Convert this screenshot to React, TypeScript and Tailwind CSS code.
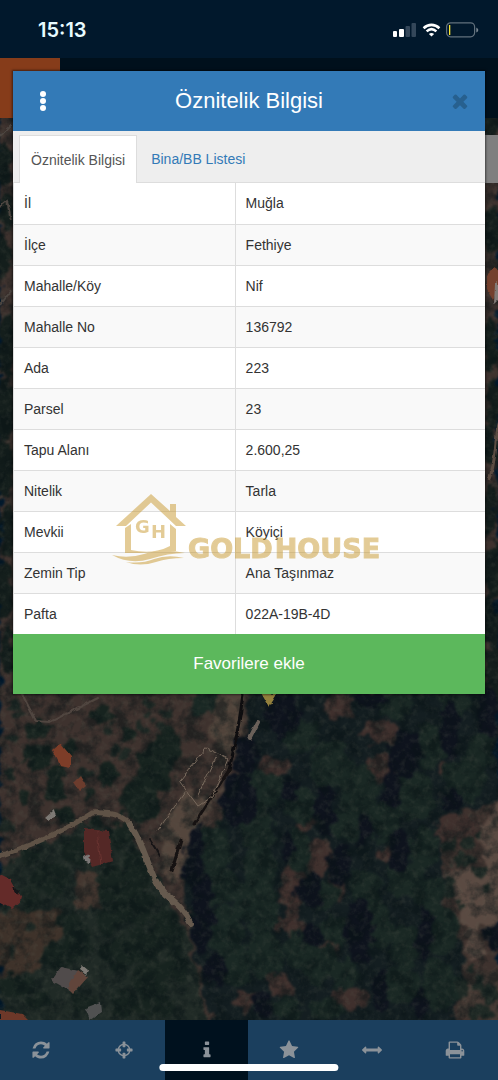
import React from 'react';

const ICONS = {
  refresh:
    'M1639 1056q0 5-1 7-64 268-268 434.5t-478 166.5q-146 0-282.5-55t-243.5-157l-129 129q-19 19-45 19t-45-19-19-45v-448q0-26 19-45t45-19h448q26 0 45 19t19 45-19 45l-137 137q71 66 161 102t187 36q134 0 250-65t186-179q11-17 53-117 8-23 30-23h192q13 0 22.5 9.5t9.5 22.5zm25-800v448q0 26-19 45t-45 19h-448q-26 0-45-19t-19-45 19-45l138-138q-148-137-349-137-134 0-250 65t-186 179q-11 17-53 117-8 23-30 23h-199q-13 0-22.5-9.5t-9.5-22.5v-7q65-268 270-434.5t480-166.5q146 0 284 55.5t245 156.5l130-129q19-19 45-19t45 19 19 45z',
  crosshairs:
    'M1325 1024h-109q-26 0-45-19t-19-45v-128q0-26 19-45t45-19h109q-32-108-112.5-188.5t-188.5-112.5v109q0 26-19 45t-45 19h-128q-26 0-45-19t-19-45v-109q-108 32-188.5 112.5t-112.5 188.5h109q26 0 45 19t19 45v128q0 26-19 45t-45 19h-109q32 108 112.5 188.5t188.5 112.5v-109q0-26 19-45t45-19h128q26 0 45 19t19 45v109q108-32 188.5-112.5t112.5-188.5zm339-192v128q0 26-19 45t-45 19h-143q-37 161-154.5 278.5t-278.5 154.5v143q0 26-19 45t-45 19h-128q-26 0-45-19t-19-45v-143q-161-37-278.5-154.5t-154.5-278.5h-143q-26 0-45-19t-19-45v-128q0-26 19-45t45-19h143q37-161 154.5-278.5t278.5-154.5v-143q0-26 19-45t45-19h128q26 0 45 19t19 45v143q161 37 278.5 154.5t154.5 278.5h143q26 0 45 19t19 45z',
  info:
    'M1216 1344v128q0 26-19 45t-45 19h-512q-26 0-45-19t-19-45v-128q0-26 19-45t45-19h64v-384h-64q-26 0-45-19t-19-45v-128q0-26 19-45t45-19h384q26 0 45 19t19 45v576h64q26 0 45 19t19 45zm-128-1152v192q0 26-19 45t-45 19h-256q-26 0-45-19t-19-45v-192q0-26 19-45t45-19h256q26 0 45 19t19 45z',
  star:
    'M1728 647q0 22-26 48l-363 354 86 500q1 7 1 20 0 21-10.5 35.5t-30.5 14.5q-19 0-40-12l-449-236-449 236q-22 12-40 12-21 0-31.5-14.5t-10.5-35.5q0-6 2-20l86-500-364-354q-25-27-25-48 0-37 56-46l502-73 225-455q19-41 49-41t49 41l225 455 502 73q56 9 56 46z',
  measure:
    'M1792 896q0 26-19 45l-256 256q-19 19-45 19t-45-19-19-45v-128h-1024v128q0 26-19 45t-45 19-45-19l-256-256q-19-19-19-45t19-45l256-256q19-19 45-19t45 19 19 45v128h1024v-128q0-26 19-45t45-19 45 19l256 256q19 19 19 45z',
  print:
    'M448 1536h896v-256h-896v256zm0-640h896v-384h-160q-40 0-68-28t-28-68v-160h-640v640zm1152 64q0-26-19-45t-45-19-45 19-19 45 19 45 45 19 45-19 19-45zm128 0v416q0 13-9.5 22.5t-22.5 9.5h-224v160q0 40-28 68t-68 28h-960q-40 0-68-28t-28-68v-160h-224q-13 0-22.5-9.5t-9.5-22.5v-416q0-79 56.5-135.5t135.5-56.5h64v-544q0-40 28-68t68-28h672q40 0 88 20t76 48l152 152q28 28 48 76t20 88v256h64q79 0 135.5 56.5t56.5 135.5z',
  times:
    'M1490 1322q0 40-28 68l-136 136q-28 28-68 28t-68-28l-294-294-294 294q-28 28-68 28t-68-28l-136-136q-28-28-28-68t28-68l294-294-294-294q-28-28-28-68t28-68l136-136q28-28 68-28t68 28l294 294 294-294q28-28 68-28t68 28l136 136q28 28 28 68t-28 68l-294 294 294 294q28 28 28 68z',
};

type IconName = keyof typeof ICONS;

const Icon = ({ name, className }: { name: IconName; className: string }) => (
  <svg viewBox="0 0 1792 1792" fill="currentColor" aria-hidden="true" className={className}>
    <path d={ICONS[name]} />
  </svg>
);

const rows = [
  ['İl', 'Muğla'],
  ['İlçe', 'Fethiye'],
  ['Mahalle/Köy', 'Nif'],
  ['Mahalle No', '136792'],
  ['Ada', '223'],
  ['Parsel', '23'],
  ['Tapu Alanı', '2.600,25'],
  ['Nitelik', 'Tarla'],
  ['Mevkii', 'Köyiçi'],
  ['Zemin Tip', 'Ana Taşınmaz'],
  ['Pafta', '022A-19B-4D'],
];

const tools: { icon: IconName; label: string }[] = [
  { icon: 'refresh', label: 'Yenile' },
  { icon: 'crosshairs', label: 'Konum' },
  { icon: 'info', label: 'Bilgi' },
  { icon: 'star', label: 'Favoriler' },
  { icon: 'measure', label: 'Ölçüm' },
  { icon: 'print', label: 'Yazdır' },
];

// cx, cy, rx, ry
type Blob = [number, number, number, number];

const clearings: Blob[] = [
  [340, 705, 16, 14], [380, 732, 18, 12], [380, 768, 14, 14], [275, 765, 16, 10],
  [316, 858, 14, 18], [292, 890, 12, 26], [290, 925, 14, 10], [348, 1000, 18, 12],
  [280, 985, 14, 12], [335, 890, 8, 14], [325, 950, 14, 7], [460, 830, 24, 16],
  [304, 822, 10, 8], [460, 770, 20, 8], [385, 855, 8, 8], [250, 1000, 14, 10],
];

const shadows: Blob[] = [
  [404, 755, 16, 24], [392, 788, 10, 18], [450, 730, 8, 30], [452, 800, 12, 12],
  [283, 715, 18, 22], [325, 810, 10, 24], [340, 865, 12, 20], [400, 850, 10, 22],
  [310, 890, 12, 18], [360, 930, 14, 34], [425, 935, 8, 26], [312, 935, 12, 12],
  [202, 915, 11, 40], [215, 970, 12, 16], [240, 800, 18, 26], [192, 860, 13, 26],
  [365, 830, 7, 16], [290, 790, 10, 12], [262, 1005, 12, 12], [380, 990, 8, 20],
  [488, 710, 10, 24], [245, 755, 14, 20], [495, 935, 8, 14], [372, 700, 16, 10],
  [288, 846, 7, 18], [195, 830, 10, 14], [420, 1005, 7, 16],
];

const crowns: Blob[] = [
  [300, 735, 16, 18], [330, 765, 22, 22], [358, 790, 20, 24], [300, 805, 18, 18],
  [345, 825, 16, 16], [385, 820, 16, 22], [415, 795, 20, 24], [430, 745, 16, 22],
  [395, 705, 18, 14], [465, 780, 22, 22], [480, 750, 16, 18], [455, 700, 16, 14],
  [295, 850, 14, 22], [260, 790, 20, 22], [258, 830, 18, 22], [260, 870, 18, 24],
  [262, 910, 18, 24], [265, 955, 18, 24], [300, 950, 16, 20], [325, 895, 14, 16],
  [335, 930, 14, 16], [365, 890, 16, 22], [378, 925, 16, 22], [405, 880, 18, 18],
  [425, 850, 14, 24], [430, 895, 16, 18], [440, 930, 20, 24], [405, 945, 16, 22],
  [320, 965, 18, 20], [345, 975, 14, 16], [400, 985, 18, 20], [440, 985, 20, 26],
  [285, 1010, 16, 12], [325, 1010, 16, 12], [215, 850, 18, 24], [220, 885, 18, 20],
  [225, 930, 18, 24], [235, 965, 18, 22], [245, 900, 12, 18], [205, 700, 12, 16],
];

const grove: Blob[] = [
  [155, 770, 18, 24], [140, 800, 18, 24], [170, 745, 12, 18], [100, 715, 11, 9],
  [38, 755, 16, 14], [55, 785, 11, 18], [38, 730, 13, 8], [62, 815, 11, 9],
  [28, 855, 12, 9], [50, 880, 18, 16], [75, 850, 13, 14], [120, 835, 12, 13],
  [112, 885, 14, 18], [135, 870, 14, 20], [135, 905, 20, 20], [110, 920, 13, 14],
  [70, 925, 12, 14], [60, 955, 18, 14], [78, 940, 12, 16], [15, 985, 18, 11],
  [38, 1000, 13, 9], [115, 955, 16, 14], [140, 945, 18, 18], [165, 930, 15, 20],
  [150, 980, 18, 18], [176, 965, 12, 18], [125, 1005, 16, 12], [160, 1005, 16, 12],
  [108, 775, 9, 12], [30, 900, 9, 14], [97, 820, 8, 7], [26, 797, 6, 8],
  [88, 795, 6, 6], [128, 735, 6, 6], [82, 1002, 12, 10], [70, 748, 9, 8],
];

const bushes: Blob[] = [
  [448, 845, 6, 6], [458, 858, 7, 7], [470, 862, 6, 6], [468, 843, 6, 6], [450, 888, 7, 10],
  [458, 905, 4, 4], [487, 887, 6, 4], [480, 834, 4, 5], [460, 990, 7, 9], [473, 968, 4, 4],
  [478, 985, 7, 8], [480, 872, 6, 5], [490, 995, 10, 10], [480, 1012, 14, 7], [110, 728, 5, 5],
  [145, 703, 5, 5], [140, 727, 6, 5], [125, 752, 5, 6], [86, 775, 5, 7], [160, 728, 7, 8],
  [12, 740, 5, 5], [14, 705, 8, 5], [30, 930, 7, 6], [12, 952, 4, 4], [6, 825, 6, 6],
  [8, 775, 6, 5], [20, 715, 5, 4], [115, 750, 4, 4], [150, 715, 4, 4], [165, 712, 5, 6],
];

// foliage in the narrow strips beside the dialog
const edges: Blob[] = [
  [4, 165, 8, 22], [8, 210, 8, 18], [3, 255, 9, 22], [8, 345, 9, 34], [5, 410, 10, 32],
  [4, 470, 10, 28], [8, 530, 9, 26], [4, 590, 9, 30], [8, 650, 6, 24], [490, 125, 8, 10],
  [491, 230, 9, 24], [490, 345, 8, 24], [494, 405, 8, 26], [490, 445, 8, 20],
  [490, 510, 8, 24], [494, 570, 9, 28], [490, 620, 9, 30], [494, 670, 9, 28],
];

const Ellipses = ({ items, fill }: { items: Blob[]; fill: string }) => (
  <g fill={fill}>
    {items.map(([cx, cy, rx, ry]) => (
      <ellipse key={`${cx}-${cy}`} cx={cx} cy={cy} rx={rx} ry={ry} />
    ))}
  </g>
);

const SatelliteMap = () => (
  <svg
    viewBox="0 118 498 902"
    preserveAspectRatio="xMidYMid slice"
    aria-hidden="true"
    className="absolute inset-0 h-full w-full"
  >
    <defs>
      <filter id="rough" x="0" y="0" width="100%" height="100%" colorInterpolationFilters="sRGB">
        <feTurbulence type="fractalNoise" baseFrequency="0.08" numOctaves={3} seed={4} />
        <feDisplacementMap in="SourceGraphic" scale={18} xChannelSelector="R" yChannelSelector="G" />
        <feGaussianBlur stdDeviation={1.2} />
      </filter>
      <filter id="worn" x="-5%" y="-5%" width="110%" height="110%" colorInterpolationFilters="sRGB">
        <feTurbulence type="fractalNoise" baseFrequency="0.15" numOctaves={2} seed={3} />
        <feDisplacementMap in="SourceGraphic" scale={4} xChannelSelector="R" yChannelSelector="G" />
        <feGaussianBlur stdDeviation={0.6} />
      </filter>
      <filter id="shade" x="0" y="0" width="100%" height="100%" colorInterpolationFilters="sRGB">
        <feTurbulence type="fractalNoise" baseFrequency="0.07" numOctaves={4} seed={9} />
        <feColorMatrix values="0 0 0 0 0.03  0 0 0 0 0.07  0 0 0 0 0.08  2.4 2 0 0 -1.9" />
      </filter>
      <filter id="glint" x="0" y="0" width="100%" height="100%" colorInterpolationFilters="sRGB">
        <feTurbulence type="fractalNoise" baseFrequency="0.16" numOctaves={3} seed={21} />
        <feColorMatrix values="0 0 0 0 0.36  0 0 0 0 0.37  0 0 0 0 0.32  2 1.4 0 0 -1.6" />
      </filter>
    </defs>

    <g filter="url(#rough)">
      <rect y="100" width="498" height="940" fill="#3e322e" />
      <path d="M0 868L80 825L125 828L165 890L190 940L210 1030H0z" fill="#202a26" />
      <path d="M-10 912L62 908L62 945L40 965L0 980z" fill="#3e322a" />
      <path d="M76 870L98 875L98 905L75 912z" fill="#43362f" />
      <path d="M250 690L498 690L498 800L440 820L445 900L465 960L450 1030H215L190 930L180 870L215 830L240 765z" fill="#141e21" />
      <Ellipses items={clearings} fill="#3f302d" />
      <Ellipses items={crowns} fill="#1a2824" />
      <Ellipses items={grove} fill="#17231f" />
      <Ellipses items={shadows} fill="#0e131d" />
      <Ellipses items={edges} fill="#141e1c" />
      <path d="M505 790L478 835L484 870L450 868L442 878L460 910L468 960L486 958L480 930L505 915z" fill="#5a4a42" />
      <path d="M456 1010L470 975L505 970V1030z" fill="#463a34" />
      <Ellipses items={bushes} fill="#1e2824" />
      <path d="M218 690L245 690L234 760L208 740z" fill="#51443b" />
      <path d="M158 832L186 790L210 800L236 770L192 832L177 885L165 872z" fill="#54463d" />
    </g>

    <rect y="100" width="498" height="940" filter="url(#shade)" opacity="0.5" />
    <rect y="100" width="498" height="940" filter="url(#glint)" opacity="0.2" />

    <g filter="url(#worn)">
      <g fill="none" strokeLinecap="round">
        <path d="M-4 857C24 848 60 834 92 813C112 812 124 816 130 825" stroke="#5f5246" strokeWidth="5" />
        <path d="M130 825C148 850 148 876 165 894C178 904 186 912 191 924" stroke="#665a4e" strokeWidth="6" />
        <path d="M35 721L50 722L98 698M22 694L36 721" stroke="#504640" strokeWidth="2" />
        <path d="M243 694C240 720 235 745 229 770" stroke="#0e0d0f" strokeWidth="3" />
        <path d="M229 770L194 824M181 840L172 870" stroke="#161212" strokeWidth="3" />
        <path d="M206 748L228 759L212 797L198 806L180 782z" stroke="#786a5d" strokeWidth="1" />
        <path d="M216 757L198 795M185 792L158 830" stroke="#786a5d" strokeWidth="1" />
        <path d="M250 738L258 722" stroke="#6a6059" strokeWidth="4" />
        <path d="M150 840L160 856" stroke="#161416" strokeWidth="2" />
      </g>
      <path d="M52 750L60 743L71 756L71 768L60 766z" fill="#7d3d28" />
      <path d="M74 782L80 776L86 786L80 791z" fill="#6c3c2d" />
      <path d="M84 829L108 831L113 861L92 867L84 852z" fill="#542826" />
      <path d="M97 831L101 865" stroke="#693330" strokeWidth="1" />
      <path d="M0 874L10 879L22 899L12 908L0 902z" fill="#642b29" />
      <path d="M12 887L20 890L17 895z" fill="#161619" />
      <path d="M51 980L61 967L79 971L70 991z" fill="#504b4b" />
      <path d="M78 970L88 977L73 994L67 988z" fill="#61453b" />
      <path d="M45 818L54 810L56 815L48 820zM82 965L88 970L86 975L80 970z" fill="#7d7974" />
      <path d="M85 1008L101 1002L102 1012L90 1020z" fill="#505151" />
      <path d="M0 1010L22 1014L28 1020H0z" fill="#6d3829" />
      <path d="M84 857L90 854L89 863L85 861z" fill="#7c7776" />
      <path d="M487 275L494 268L500 272V288L493 300L487 290z" fill="#74402d" />
      <path d="M495 284L498 281V300L494 304z" fill="#827a76" />
      <path d="M0 136L12 124M0 207L7 201L11 220M0 305L12 290" fill="none" stroke="#4d4641" strokeWidth="2" />
      <path d="M489 480C497 460 494 440 500 420" fill="none" stroke="#5b4c42" strokeWidth="3" />
      <path d="M260 691L269 707L279 691L271 695L265 691z" fill="#93803d" />
    </g>
  </svg>
);

const StatusBar = () => (
  <header className="flex h-[58px] items-center justify-between bg-[#01182c] pl-[38px] pr-[19px] pt-[2px]">
    <span className="font-['Inter',sans-serif] text-[20px] font-semibold leading-6 text-[#e8fbff]">15:13</span>
    <div className="flex items-center gap-[5px]">
      <svg viewBox="0 0 24 14" className="h-[14px] w-6" aria-hidden="true">
        <rect x="0" y="8" width="4" height="6" rx="1" fill="#fff" />
        <rect x="6" y="6" width="5" height="8" rx="1" fill="#fff" />
        <rect x="12.5" y="3" width="4.5" height="11" rx="1" fill="#34475a" />
        <rect x="18.5" y="0" width="4.5" height="14" rx="1" fill="#34475a" />
      </svg>
      <svg viewBox="0 0 20 15" className="h-[14px] w-[19px]" aria-hidden="true" fill="none" stroke="#fff" strokeWidth="2.7">
        <path d="M1.5 5.6C6.5 0.8 13.5 0.8 18.5 5.6" />
        <path d="M4.8 9C8 6 12 6 15.2 9" />
        <path d="M10 14.5L7.2 11.7C8.8 10.4 11.2 10.4 12.8 11.7z" fill="#fff" stroke="none" />
      </svg>
      <svg viewBox="0 0 33 16" className="h-4 w-[33px]" aria-hidden="true">
        <rect x="0.6" y="0.8" width="28" height="14" rx="4" fill="none" stroke="#62707c" strokeWidth="1.2" />
        <rect x="3" y="3" width="1.3" height="10" fill="#ffe92e" />
        <path d="M30.3 5.5Q32.3 6.5 32.3 8T30.3 10.500z" fill="#7b8791" />
      </svg>
    </div>
  </header>
);

const Watermark = () => (
  <div className="pointer-events-none absolute bottom-[129px] left-[99px] flex items-end text-[#c8992f] opacity-50">
    <svg viewBox="0 0 76 72" className="h-[72px] w-[76px]" aria-hidden="true" fill="currentColor">
      <path d="M4 33L39 1L58 18V11H64V24L74 33H64L39 9.500L14 33z" />
      <path d="M13 35L19 31V57Q41 62 58 53V31L64 36V58Q42 60 13 60z" />
      <path d="M0 62Q16 66 32 61Q50 55 73 60Q56 60 38 66Q18 72 0 62z" />
      <path d="M14 69Q30 71 42 66Q56 61 72 65Q56 65 44 69Q28 74 14 69z" />
      <g fontFamily="DejaVu Sans, sans-serif" fontWeight="700">
        <text x="23" y="40" fontSize="18">G</text>
        <text x="39" y="45" fontSize="18">H</text>
      </g>
    </svg>
    <p className="flex gap-[2px] font-['DejaVu_Sans',sans-serif] text-[27px] font-bold leading-8 [-webkit-text-stroke:1px_currentColor]">
      <span>GOLD</span>
      <span>HOUSE</span>
    </p>
  </div>
);

const ParcelDialog = () => (
  <section
    role="dialog"
    aria-labelledby="dialog-title"
    className="absolute inset-x-[13px] top-[71px] bg-white shadow-[0_0_2px_1px_rgba(0,0,0,0.5)]"
  >
    <div className="flex h-[60px] items-center justify-between bg-[#337ab7] px-[14px] text-white">
      <button type="button" aria-label="Menü" className="flex h-8 w-8 flex-col items-center justify-center gap-px">
        <span className="h-[6px] w-[6px] rounded-full bg-white" />
        <span className="h-[6px] w-[6px] rounded-full bg-white" />
        <span className="h-[6px] w-[6px] rounded-full bg-white" />
      </button>
      <h1 id="dialog-title" className="text-[22px] leading-7">Öznitelik Bilgisi</h1>
      <button type="button" aria-label="Kapat" className="flex h-8 w-8 items-center justify-end text-[#27608f]">
        <Icon name="times" className="h-[22px] w-[22px]" />
      </button>
    </div>

    <div role="tablist" className="flex h-[52px] items-end border-b border-[#ddd] bg-[#eee] pl-[6px] text-[14px] leading-5">
      <button
        type="button"
        role="tab"
        aria-selected="true"
        className="-mb-px h-12 border border-b-0 border-[#ddd] bg-white px-[11px] text-[#555]"
      >
        Öznitelik Bilgisi
      </button>
      <button type="button" role="tab" aria-selected="false" className="h-[47px] px-[14px] text-[#337ab7]">
        Bina/BB Listesi
      </button>
    </div>

    <table className="w-full table-fixed border-l border-[#ddd] text-left text-[14px] leading-5 text-[#333]">
      <colgroup>
        <col className="w-[47%]" />
        <col />
      </colgroup>
      <tbody>
        {rows.map(([label, value]) => (
          <tr key={label} className="h-[41px] border-b border-[#ddd] last:border-0 even:bg-[#f9f9f9]">
            <th scope="row" className="border-r border-[#ddd] px-[10px] font-normal">{label}</th>
            <td className="px-[10px]">{value}</td>
          </tr>
        ))}
      </tbody>
    </table>

    <button type="button" className="h-[60px] w-full bg-[#5cb85c] text-[17px] leading-6 text-white">
      Favorilere ekle
    </button>
    <Watermark />
  </section>
);

export default function App() {
  return (
    <div className="relative flex min-h-screen flex-col bg-[#01182c] font-['Liberation_Sans',Arial,sans-serif]">
      <StatusBar />
      <div className="h-[60px] bg-[#00101c]">
        <button type="button" aria-label="Ana menü" className="block h-full w-[60px] bg-[#863c1a]" />
      </div>

      <main className="relative min-h-[620px] flex-1 overflow-hidden">
        <SatelliteMap />
        <div className="absolute right-0 top-[17px] h-12 w-20 bg-[#7f7f7f]" />
      </main>

      <nav className="relative grid h-[60px] grid-cols-6 bg-[#1b3f5e] pr-[2px]">
        {tools.map(({ icon, label }) => (
          <button
            key={icon}
            type="button"
            aria-label={label}
            className={`flex items-center justify-center text-[#8b9299] ${icon === 'info' ? 'bg-[#00111e]' : ''}`}
          >
            <Icon name={icon} className="h-5 w-5" />
          </button>
        ))}
        <div className="absolute bottom-[9px] left-1/2 h-[7px] w-[36%] -translate-x-1/2 rounded-full bg-white" />
      </nav>

      <ParcelDialog />
    </div>
  );
}
